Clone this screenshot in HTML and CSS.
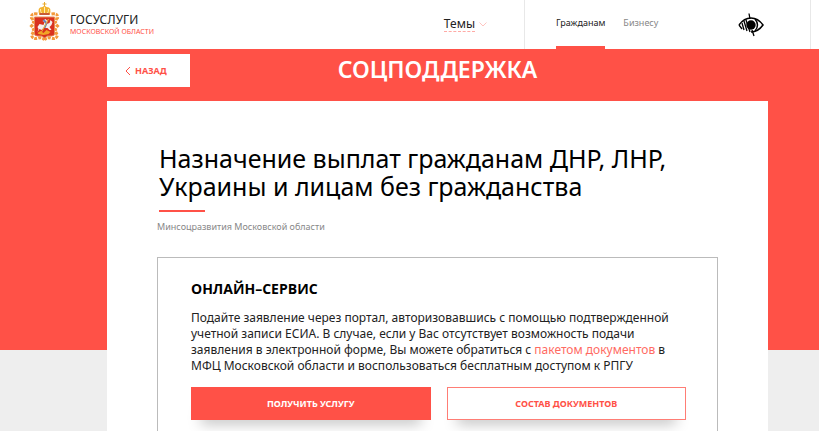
FILE: index.html
```
<!DOCTYPE html>
<html lang="ru">
<head>
<meta charset="utf-8">
<meta name="viewport" content="width=device-width, initial-scale=1">
<title>Соцподдержка</title>
<link rel="stylesheet" href="styles.css">
</head>
<body>
<header class="header">
  <a class="brand" href="#">
    <svg class="crest" viewBox="0 0 30 40" aria-hidden="true">
      <g fill="none" stroke="#f39a3b" stroke-width="3" stroke-dasharray="3 1">
        <path d="M8 12Q1 11 2 16Q6 20 2 24Q6 28 2 33Q3 38 9 36Q13 35 15 38"/>
        <path d="M22 12Q29 11 28 16Q24 20 28 24Q24 28 28 33Q27 38 21 36Q17 35 15 38"/>
      </g>
      <path d="M2 15Q7 15 6 19T5 25T5 32M28 15Q23 15 24 19T25 25T25 32" fill="none" stroke="#fbd08b"/>
      <path d="M10 13Q7 5 13 5Q14 4 15 4Q16 4 17 5Q23 5 20 13Z" fill="#f3b22e"/>
      <path d="M11 7Q11 10 12 11M15 5V11M19 7Q19 10 18 11" fill="none" stroke="#fff0b5"/>
      <path d="M15 0V4M13 2H17" stroke="#e9a92d" fill="none"/>
      <path d="M10 12H20" stroke="#c85b36" stroke-width="2"/>
      <path d="M5 15H25V32Q25 34 22 34H18L15 36L12 34H8Q5 34 5 32Z" fill="#d9311f" stroke="#e88a55"/>
      <path d="M8 30L9 27L8 25L10 22L14 23L15 20L13 19L16 17L18 19L17 22L20 21L21 18L23 20L22 23L20 25L22 28L20 28L18 26L14 26L12 28L10 27Z" fill="#f5eeee"/>
      <path d="M14 18L17 21L15 26" fill="none" stroke="#6981b8" stroke-width="2"/>
      <path d="M19 17L12 30" stroke="#eab83b"/>
      <path d="M8 31L11 29L14 31L17 28L21 30L19 32L14 33L9 32Z" fill="#f0a526"/>
    </svg>
    <span class="brand-text">
      <span class="brand-name">ГОСУСЛУГИ</span>
      <span class="brand-region">МОСКОВСКОЙ ОБЛАСТИ</span>
    </span>
  </a>
  <button class="topics" type="button">
    <span class="topics-label">Темы</span>
    <svg class="topics-arrow" viewBox="0 0 8 5" aria-hidden="true"><path d="M.5.5L4 4L7.500.5"/></svg>
  </button>
  <nav class="audience">
    <a class="tab tab-active" href="#">Гражданам</a>
    <a class="tab" href="#">Бизнесу</a>
  </nav>
  <button class="vision" type="button" aria-label="Версия для слабовидящих">
    <svg viewBox="0 0 26 24" aria-hidden="true">
      <path d="M1 12Q6 5 13 5T25 12Q20 19 13 19" fill="none" stroke="#000" stroke-width="1.500"/>
      <circle cx="13" cy="12" r="4.700" fill="#000"/>
      <path d="M17 6Q22 12 17 18" fill="none" stroke="#000" stroke-width="1.400"/>
      <path d="M11 .5L12 6M14 17L16 23M1 12L4 16M4 10L6 17M6 8L9 18M8 7L12 19" fill="none" stroke="#000" stroke-width="1.300"/>
    </svg>
  </button>
</header>
<main class="page">
  <div class="topbar">
    <a class="back" href="#">
      <svg class="back-arrow" viewBox="0 0 6 10" aria-hidden="true"><path d="M5 1L1 5L5 9"/></svg>
      НАЗАД
    </a>
    <div class="section-title">СОЦПОДДЕРЖКА</div>
  </div>
  <article class="card">
    <h1 class="title">Назначение выплат гражданам ДНР, ЛНР, Украины и лицам без гражданства</h1>
    <p class="agency">Минсоцразвития Московской области</p>
    <section class="service">
      <h2 class="service-title">ОНЛАЙН–СЕРВИС</h2>
      <p class="service-text">Подайте заявление через портал, авторизовавшись с помощью подтвержденной учетной записи ЕСИА. В случае, если у Вас отсутствует возможность подачи заявления в электронной форме, Вы можете обратиться с <a class="link" href="#">пакетом документов</a> в МФЦ Московской области и воспользоваться бесплатным доступом к РПГУ</p>
      <div class="actions">
        <button class="button button-primary" type="button">ПОЛУЧИТЬ УСЛУГУ</button>
        <button class="button" type="button">СОСТАВ ДОКУМЕНТОВ</button>
      </div>
    </section>
  </article>
</main>
</body>
</html>
```
FILE: styles.css
```
* {
  box-sizing: border-box;
}

body {
  display: flex;
  flex-direction: column;
  height: 100vh;
  margin: 0;
  overflow: hidden;
  background: #eee;
  color: #222;
  font-family: "Noto Sans", "Open Sans", sans-serif;
}

h1, h2, p {
  margin: 0;
}

a {
  color: inherit;
  text-decoration: none;
}

button {
  padding: 0;
  border: 0;
  border-radius: 0;
  background: none;
  color: inherit;
  font: inherit;
  cursor: pointer;
}

.header {
  display: flex;
  flex: none;
  height: 49px;
  padding-right: 8px;
  background: #fff;
}

.brand {
  display: flex;
  flex: 1;
  gap: 10px;
  padding: 2px 0 0 29px;
}

.crest {
  width: 31px;
  height: 40px;
}

.brand-text {
  display: flex;
  flex-direction: column;
  padding-top: 10px;
}

.brand-name {
  font-size: 12px;
  line-height: 16px;
}

.brand-region {
  color: #ff5147;
  font-size: 7px;
  line-height: 8px;
}

.topics {
  display: flex;
  align-items: center;
  gap: 4px;
  padding: 0 37px 0 0;
}

.topics-label {
  border-bottom: 1px dashed #ffaaa5;
  font-size: 12px;
  line-height: 14px;
}

.topics-arrow {
  width: 8px;
  height: 5px;
  fill: none;
  stroke: #ffc4c0;
}

.audience {
  display: flex;
  flex: none;
  gap: 18px;
  width: 182px;
  padding-left: 31px;
  border-left: 1px solid #e8e8e8;
}

.tab {
  border-bottom: 3px solid transparent;
  color: #888;
  font-size: 9px;
  line-height: 45px;
}

.tab-active {
  border-color: #ff5147;
  color: #222;
}

.vision {
  width: 105px;
  padding-right: 14px;
  border-right: 1px solid #e8e8e8;
}

.vision svg {
  width: 26px;
  height: 24px;
  vertical-align: middle;
}

.page {
  display: flex;
  flex: 1;
  flex-direction: column;
  min-height: 0;
  padding: 0 51px 0 107px;
  background: linear-gradient(#ff5147 301px, #eee 301px);
}

.topbar {
  display: grid;
  flex: none;
  grid-template-columns: 83px 1fr 83px;
  height: 52px;
  padding-top: 5px;
}

.back {
  display: flex;
  align-items: center;
  gap: 4px;
  height: 33px;
  padding-left: 18px;
  background: #fff;
  color: #ff5147;
  font-size: 9px;
  font-weight: 700;
}

.back-arrow {
  width: 6px;
  height: 10px;
  fill: none;
  stroke: #ff5147;
}

.section-title {
  color: #fff;
  font-size: 23px;
  font-weight: 600;
  line-height: 30px;
  text-align: center;
}

.card {
  flex: 1 0 auto;
  padding: 43px 50px 0;
  background: #fff;
}

.title {
  padding-left: 2px;
  color: #000;
  font-size: 25px;
  font-weight: 400;
  line-height: 28px;
}

.title::after {
  display: block;
  width: 46px;
  height: 2px;
  margin-top: 10px;
  background: #ff5147;
  content: "";
}

.agency {
  margin-top: 8px;
  color: #888;
  font-size: 9px;
  line-height: 14px;
}

.service {
  margin-top: 23px;
  padding: 20px 31px 24px 33px;
  border: 1px solid #bbb;
}

.service-title {
  color: #000;
  font-family: "Open Sans", sans-serif;
  font-size: 14px;
  font-weight: 700;
  line-height: 22px;
}

.service-text {
  margin-top: 10px;
  font-size: 12px;
  line-height: 16px;
}

.link {
  color: #ff6b63;
}

.actions {
  display: grid;
  grid-template-columns: 1fr 1fr;
  gap: 16px;
  margin-top: 13px;
}

.button {
  height: 33px;
  border: 1px solid #ff7d75;
  background: #fff;
  box-shadow: 0 14px 14px -10px rgba(0, 0, 0, 0.25);
  color: #ff5147;
  font-size: 9px;
  font-weight: 700;
}

.button-primary {
  border-color: #ff5147;
  background: #ff5147;
  color: #fff;
}
```
